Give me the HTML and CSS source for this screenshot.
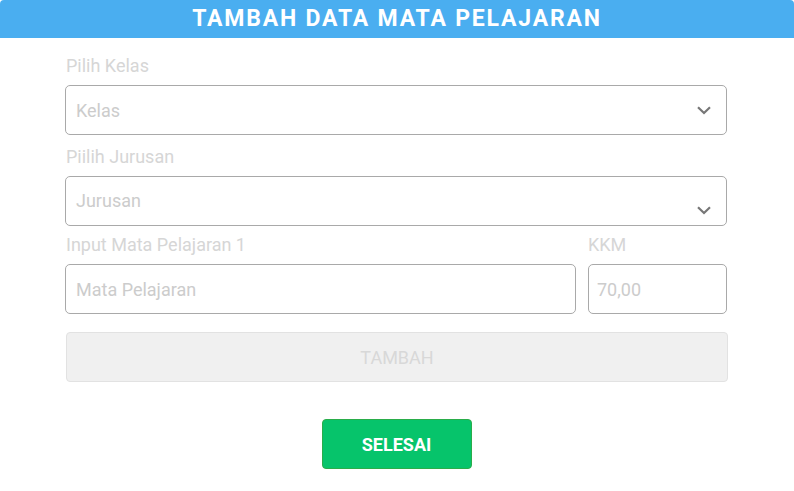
FILE: index.html
```html
<!DOCTYPE html>
<html lang="id">
<head>
<meta charset="utf-8">
<title>Tambah Data Mata Pelajaran</title>
<link rel="stylesheet" href="styles.css">
</head>
<body>
<header class="header">TAMBAH DATA MATA PELAJARAN</header>
<main class="form">
  <div class="label label-first">Pilih Kelas</div>
  <div class="box select">
    <span class="placeholder">Kelas</span>
    <svg class="chev" width="14" height="9" viewBox="0 0 14 9"><path d="M1 1.2 L7 7 L13 1.2" fill="none" stroke="#777" stroke-width="2.2"/></svg>
  </div>
  <div class="label label-second">Piilih Jurusan</div>
  <div class="box select select-low">
    <span class="placeholder">Jurusan</span>
    <svg class="chev chev-low" width="14" height="9" viewBox="0 0 14 9"><path d="M1 1.2 L7 7 L13 1.2" fill="none" stroke="#777" stroke-width="2.2"/></svg>
  </div>
  <div class="row row-labels">
    <div class="label main-col">Input Mata Pelajaran 1</div>
    <div class="label kkm-col">KKM</div>
  </div>
  <div class="row">
    <div class="box main-col"><span class="placeholder">Mata Pelajaran</span></div>
    <div class="box kkm-col kkm-box"><span class="placeholder">70,00</span></div>
  </div>
  <div class="tambah">TAMBAH</div>
  <div class="done-wrap"><div class="done">SELESAI</div></div>
</main>
</body>
</html>
```

FILE: styles.css
```css
* { box-sizing: border-box; }
html, body { margin: 0; padding: 0; background: #fff; }
body { font-family: Roboto, "Noto Sans", "Liberation Sans", sans-serif; }

.header {
  height: 38px;
  background: #4aaef0;
  border-radius: 4px 4px 0 0;
  color: #fff;
  font-weight: 700;
  font-size: 23px;
  letter-spacing: 1.8px;
  line-height: 38px;
  text-align: center;
}

.form {
  margin-left: 65px;
  width: 662px;
}

.label {
  font-size: 18px;
  line-height: 20px;
  color: #d6d6d6;
  padding-left: 1px;
}
.label-first { margin-top: 18px; margin-bottom: 9px; }
.label-second { margin-top: 12px; margin-bottom: 9px; }

.box {
  height: 50px;
  border: 1px solid #a9a9a9;
  border-radius: 5px;
  display: flex;
  align-items: center;
  padding-left: 10px;
}
.placeholder {
  font-size: 18px;
  color: #cccccc;
}
.kkm-box { padding-left: 8px; }
.select { justify-content: space-between; padding-right: 15px; }
.chev { display: block; }
.chev-low { align-self: flex-end; margin-bottom: 10px; }
.select-low .placeholder { margin-top: -2px; }

.row { display: flex; gap: 12px; }
.row-labels { margin-top: 9px; margin-bottom: 9px; }
.main-col { width: 511px; }
.kkm-col { width: 139px; }
.row-labels .kkm-col { padding-left: 0; }

.tambah {
  margin-top: 18px;
  margin-left: 1px;
  width: 662px;
  height: 50px;
  background: #f0f0f0;
  border: 1px solid #e2e2e2;
  border-radius: 4px;
  color: #d8d8d8;
  font-size: 18px;
  display: flex;
  align-items: center;
  justify-content: center;
}

.done-wrap {
  margin-top: 37px;
  display: flex;
  justify-content: center;
  padding-left: 1px;
}
.done {
  width: 150px;
  height: 50px;
  background: #06c46b;
  border: 1px solid #2aad4a;
  border-radius: 4px;
  color: #fff;
  font-weight: 700;
  font-size: 18px;
  display: flex;
  align-items: center;
  justify-content: center;
}
```
